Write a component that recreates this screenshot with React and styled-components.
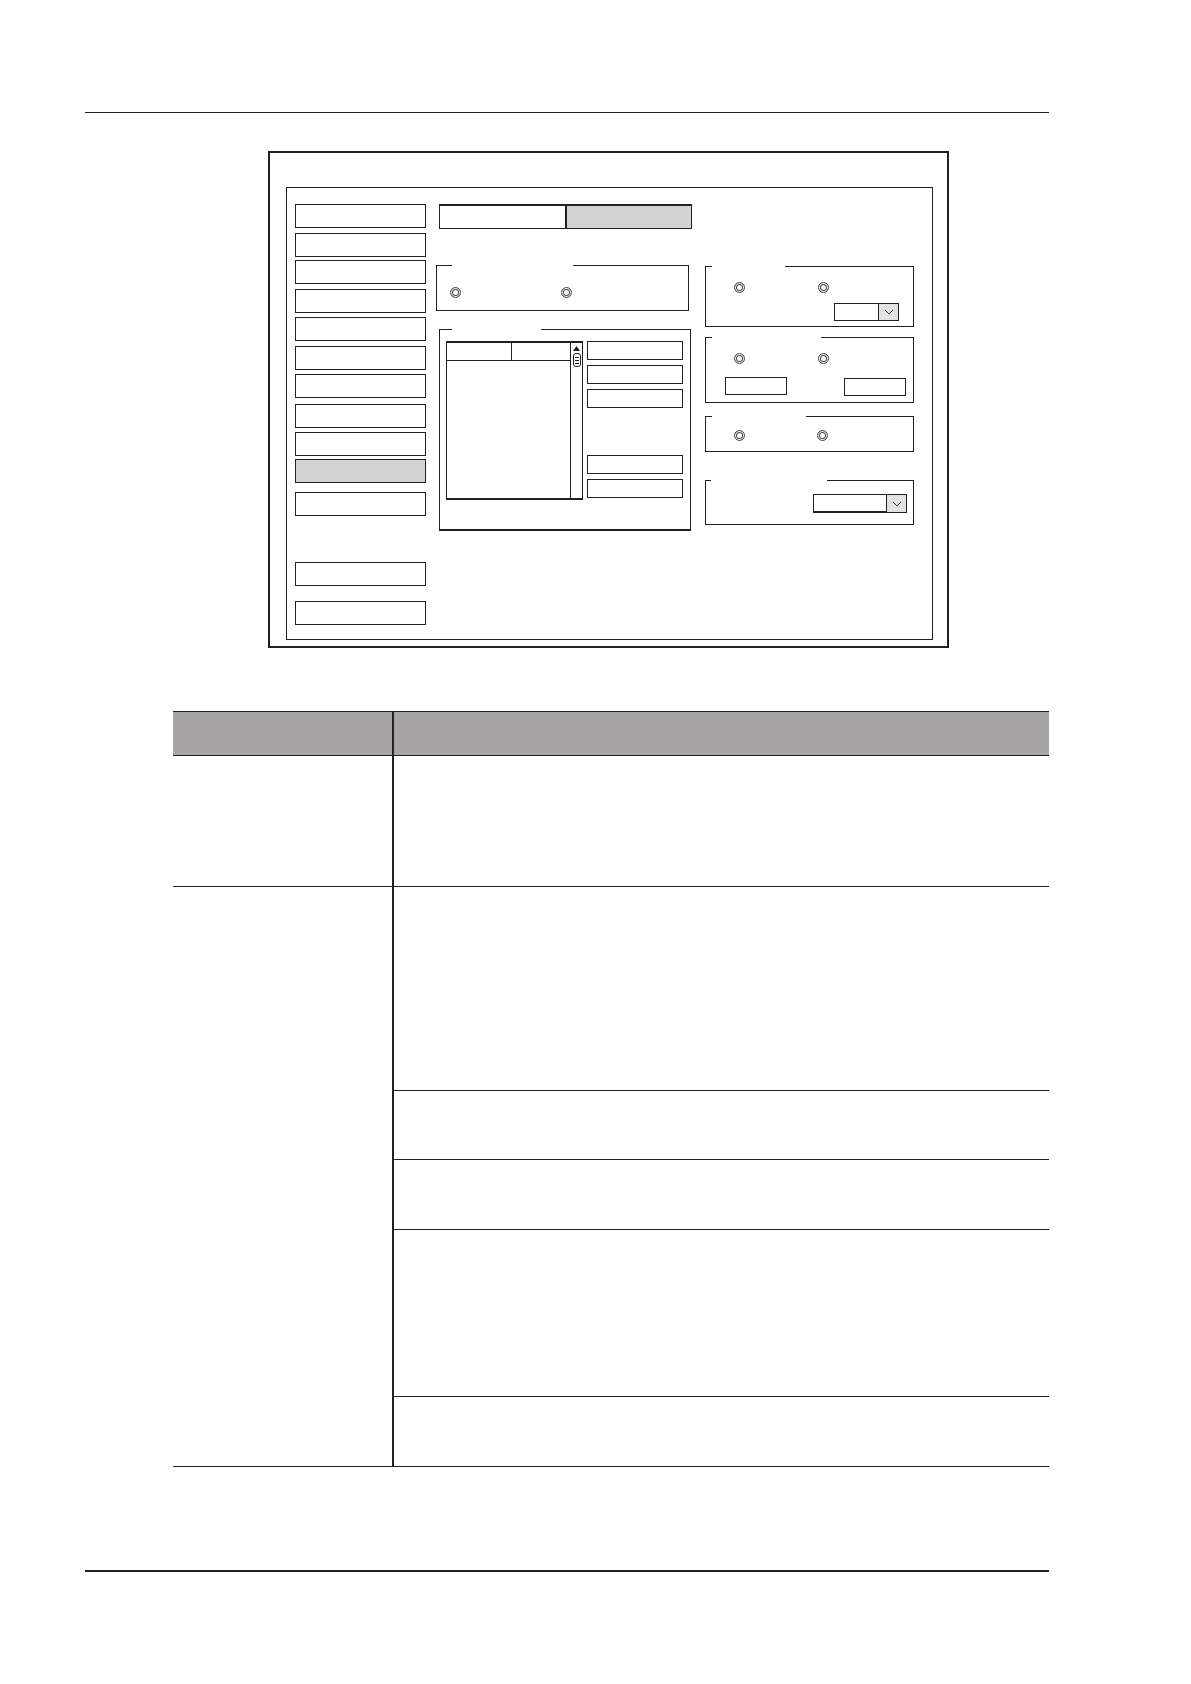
import React from 'react';
import styled, { createGlobalStyle } from 'styled-components';

const ink = '#231f20';

const Global = createGlobalStyle`
  html, body { margin: 0; padding: 0; background: #fff; }
  body { font-family: "Liberation Sans", Arial, sans-serif; }
`;

const Page = styled.div`
  width: 1191px;
  min-height: 1684px;
  background: #fff;
  display: flow-root;
`;

const Rule = styled.div`
  margin: ${(p) => p.$mt}px 0 0 85px;
  width: 964px;
  height: ${(p) => p.$h}px;
  background: ${ink};
`;

/* ---------- dialog figure ---------- */
const Frame = styled.div`
  box-sizing: border-box;
  margin: 38px 0 0 268px;
  width: 681px;
  height: 497px;
  border: 2px solid ${ink};
  padding: 34px 14px 6px 16px;
`;

const Window = styled.div`
  box-sizing: border-box;
  width: 100%;
  height: 100%;
  border: 1px solid ${ink};
  display: flex;
  align-items: flex-start;
`;

const NavColumn = styled.div`
  margin-left: 8px;
  width: 131px;
  display: flex;
  flex-direction: column;
`;

const NavButton = styled.div`
  box-sizing: border-box;
  height: 24px;
  margin-top: ${(p) => p.$mt}px;
  border: 1px solid ${ink};
  background: ${(p) => (p.$active ? '#d3d3d3' : '#fff')};
`;

const MidColumn = styled.div`
  margin-left: 10px;
  width: 256px;
  display: flex;
  flex-direction: column;
`;

const TabBar = styled.div`
  display: flex;
  margin: 16px 0 0 3px;
`;

const Tab = styled.div`
  box-sizing: border-box;
  height: 25px;
  width: ${(p) => p.$w}px;
  border-top: 2px solid ${ink};
  border-bottom: 1px solid ${ink};
  border-left: ${(p) => (p.$first ? `1px solid ${ink}` : 'none')};
  border-right: ${(p) => (p.$first ? `2px solid ${ink}` : `1px solid ${ink}`)};
  background: ${(p) => (p.$active ? '#d3d3d3' : '#fff')};
`;

const RightColumn = styled.div`
  margin-left: 13px;
  width: 209px;
  display: flex;
  flex-direction: column;
`;

const Group = styled.div`
  position: relative;
  box-sizing: border-box;
  width: ${(p) => p.$w}px;
  height: ${(p) => p.$h}px;
  margin-top: ${(p) => p.$mt}px;
  margin-left: ${(p) => p.$ml || 0}px;
  border: 1px solid ${ink};
  border-bottom-width: ${(p) => p.$bb || 1}px;
`;

const LegendGap = styled.span`
  position: absolute;
  top: -1px;
  left: ${(p) => p.$l - 1}px;
  width: ${(p) => p.$w}px;
  height: 1px;
  background: #fff;
`;

const RadioRow = styled.div`
  display: flex;
  gap: ${(p) => p.$gap}px;
  padding-left: ${(p) => p.$pl}px;
  margin-top: ${(p) => p.$mt}px;
`;

const Radio = styled.span`
  display: block;
  box-sizing: border-box;
  width: 11px;
  height: 11px;
  border-radius: 50%;
  border: 1.5px solid #4a4647;
  box-shadow: inset 0 0 0 1px #fff, inset 0 0 0 2px #4a4647;
  background: #fff;
`;

const EndRow = styled.div`
  display: flex;
  justify-content: flex-end;
  padding-right: ${(p) => p.$pr}px;
  margin-top: ${(p) => p.$mt}px;
`;

const SpreadRow = styled.div`
  display: flex;
  justify-content: space-between;
  align-items: flex-start;
  padding: 0 7px 0 19px;
  margin-top: ${(p) => p.$mt}px;
`;

const TextBox = styled.div`
  box-sizing: border-box;
  width: 62px;
  height: 18px;
  margin-top: ${(p) => p.$mt || 0}px;
  border: 1px solid ${ink};
`;

const Dropdown = styled.div`
  box-sizing: border-box;
  display: flex;
  width: ${(p) => p.$w}px;
  height: ${(p) => p.$h}px;
  border: 1px solid ${ink};
`;

const DropText = styled.div`
  flex: 1;
  background: #fff;
  border-bottom: ${(p) => (p.$thick ? `1.5px solid ${ink}` : 'none')};
`;

const DropArrow = styled.div`
  width: 19px;
  border-left: 1px solid ${ink};
  background: #e2e2e2;
  display: flex;
  align-items: center;
  justify-content: center;
`;

const ListArea = styled.div`
  display: flex;
  align-items: flex-start;
  padding: 11px 0 0 6px;
`;

const ListBox = styled.div`
  box-sizing: border-box;
  width: 137px;
  height: 159px;
  display: flex;
  border-top: 2px solid ${ink};
  border-bottom: 2px solid ${ink};
  border-left: 1.5px solid ${ink};
  border-right: 1px solid ${ink};
`;

const ListMain = styled.div`
  flex: 1;
`;

const ListHead = styled.div`
  display: flex;
  height: 17px;
  border-bottom: 1px solid ${ink};
`;

const HeadCell = styled.div`
  width: ${(p) => (p.$w ? `${p.$w}px` : 'auto')};
  flex: ${(p) => (p.$w ? 'none' : 1)};
  border-right: ${(p) => (p.$w ? `1px solid ${ink}` : 'none')};
`;

const ScrollTrack = styled.div`
  width: 11px;
  border-left: 1px solid ${ink};
  display: flex;
  flex-direction: column;
  align-items: center;
  padding-top: 3px;
  gap: 2px;
`;

const Thumb = styled.div`
  box-sizing: border-box;
  width: 8px;
  height: 14px;
  border: 1px solid ${ink};
  border-radius: 3px;
  display: flex;
  flex-direction: column;
  align-items: center;
  justify-content: center;
  gap: 2px;
`;

const ThumbLine = styled.span`
  display: block;
  width: 4px;
  height: 1px;
  background: ${ink};
`;

const SideColumn = styled.div`
  margin-left: 4px;
  display: flex;
  flex-direction: column;
`;

const SideButton = styled.div`
  box-sizing: border-box;
  width: 96px;
  height: 19px;
  margin-top: ${(p) => p.$mt}px;
  border: 1px solid ${ink};
`;

/* ---------- table ---------- */
const Table = styled.div`
  margin: 63px 0 0 173px;
  width: 876px;
  border-top: 1px solid ${ink};
`;

const Row = styled.div`
  box-sizing: border-box;
  display: grid;
  grid-template-columns: 221px 655px;
  height: ${(p) => p.$h}px;
  border-bottom: 1px solid ${ink};
  background: ${(p) => (p.$head ? '#a7a5a6' : '#fff')};
`;

const KeyCell = styled.div`
  border-right: 2px solid ${ink};
`;

const ValueStack = styled.div`
  display: flex;
  flex-direction: column;
`;

const SubRow = styled.div`
  box-sizing: border-box;
  height: ${(p) => p.$h}px;
  border-bottom: ${(p) => (p.$last ? 'none' : `1px solid ${ink}`)};
`;

const Chevron = () => (
  <svg width="10" height="6" viewBox="0 0 10 6">
    <polyline points="1,1 5,5 9,1" fill="none" stroke="#333" strokeWidth="1" />
  </svg>
);

const UpArrow = () => (
  <svg width="7" height="5" viewBox="0 0 7 5">
    <polygon points="3.5,0 7,5 0,5" fill={ink} />
  </svg>
);

const navMargins = [16, 5, 3, 5, 4, 5, 4, 6, 4, 3, 9, 46, 15];
const subRows = [204, 69, 70, 167, 69];

export default function App() {
  return (
    <Page>
      <Global />
      <Rule $mt={112} $h={1} />

      <Frame>
        <Window>
          <NavColumn>
            {navMargins.map((m, i) => (
              <NavButton key={i} $mt={m} $active={i === 9} />
            ))}
          </NavColumn>

          <MidColumn>
            <TabBar>
              <Tab $first $w={128} />
              <Tab $active $w={125} />
            </TabBar>

            <Group $w={253} $h={46} $mt={36}>
              <LegendGap $l={16} $w={121} />
              <RadioRow $pl={13} $mt={21} $gap={100}>
                <Radio />
                <Radio />
              </RadioRow>
            </Group>

            <Group $w={252} $h={202} $mt={18} $ml={3} $bb={2}>
              <LegendGap $l={13} $w={89} />
              <ListArea>
                <ListBox>
                  <ListMain>
                    <ListHead>
                      <HeadCell $w={64} />
                      <HeadCell />
                    </ListHead>
                  </ListMain>
                  <ScrollTrack>
                    <UpArrow />
                    <Thumb>
                      <ThumbLine />
                      <ThumbLine />
                      <ThumbLine />
                    </Thumb>
                  </ScrollTrack>
                </ListBox>
                <SideColumn>
                  <SideButton $mt={0} />
                  <SideButton $mt={5} />
                  <SideButton $mt={5} />
                  <SideButton $mt={47} />
                  <SideButton $mt={5} />
                </SideColumn>
              </ListArea>
            </Group>
          </MidColumn>

          <RightColumn>
            <Group $w={209} $h={61} $mt={78}>
              <LegendGap $l={7} $w={73} />
              <RadioRow $pl={28} $mt={15} $gap={73}>
                <Radio />
                <Radio />
              </RadioRow>
              <EndRow $pr={14} $mt={10}>
                <Dropdown $w={65} $h={18}>
                  <DropText />
                  <DropArrow>
                    <Chevron />
                  </DropArrow>
                </Dropdown>
              </EndRow>
            </Group>

            <Group $w={209} $h={66} $mt={10}>
              <LegendGap $l={7} $w={109} />
              <RadioRow $pl={28} $mt={15} $gap={73}>
                <Radio />
                <Radio />
              </RadioRow>
              <SpreadRow $mt={13}>
                <TextBox />
                <TextBox $mt={1} />
              </SpreadRow>
            </Group>

            <Group $w={209} $h={36} $mt={13}>
              <LegendGap $l={7} $w={94} />
              <RadioRow $pl={28} $mt={13} $gap={72}>
                <Radio />
                <Radio />
              </RadioRow>
            </Group>

            <Group $w={209} $h={45} $mt={28}>
              <LegendGap $l={6} $w={116} />
              <EndRow $pr={6} $mt={13}>
                <Dropdown $w={94} $h={19}>
                  <DropText $thick />
                  <DropArrow>
                    <Chevron />
                  </DropArrow>
                </Dropdown>
              </EndRow>
            </Group>
          </RightColumn>
        </Window>
      </Frame>

      <Table>
        <Row $head $h={44}>
          <KeyCell />
          <div />
        </Row>
        <Row $h={131}>
          <KeyCell />
          <div />
        </Row>
        <Row $h={580}>
          <KeyCell />
          <ValueStack>
            {subRows.map((h, i) => (
              <SubRow key={i} $h={h} $last={i === subRows.length - 1} />
            ))}
          </ValueStack>
        </Row>
      </Table>

      <Rule $mt={103} $h={2} />
    </Page>
  );
}
